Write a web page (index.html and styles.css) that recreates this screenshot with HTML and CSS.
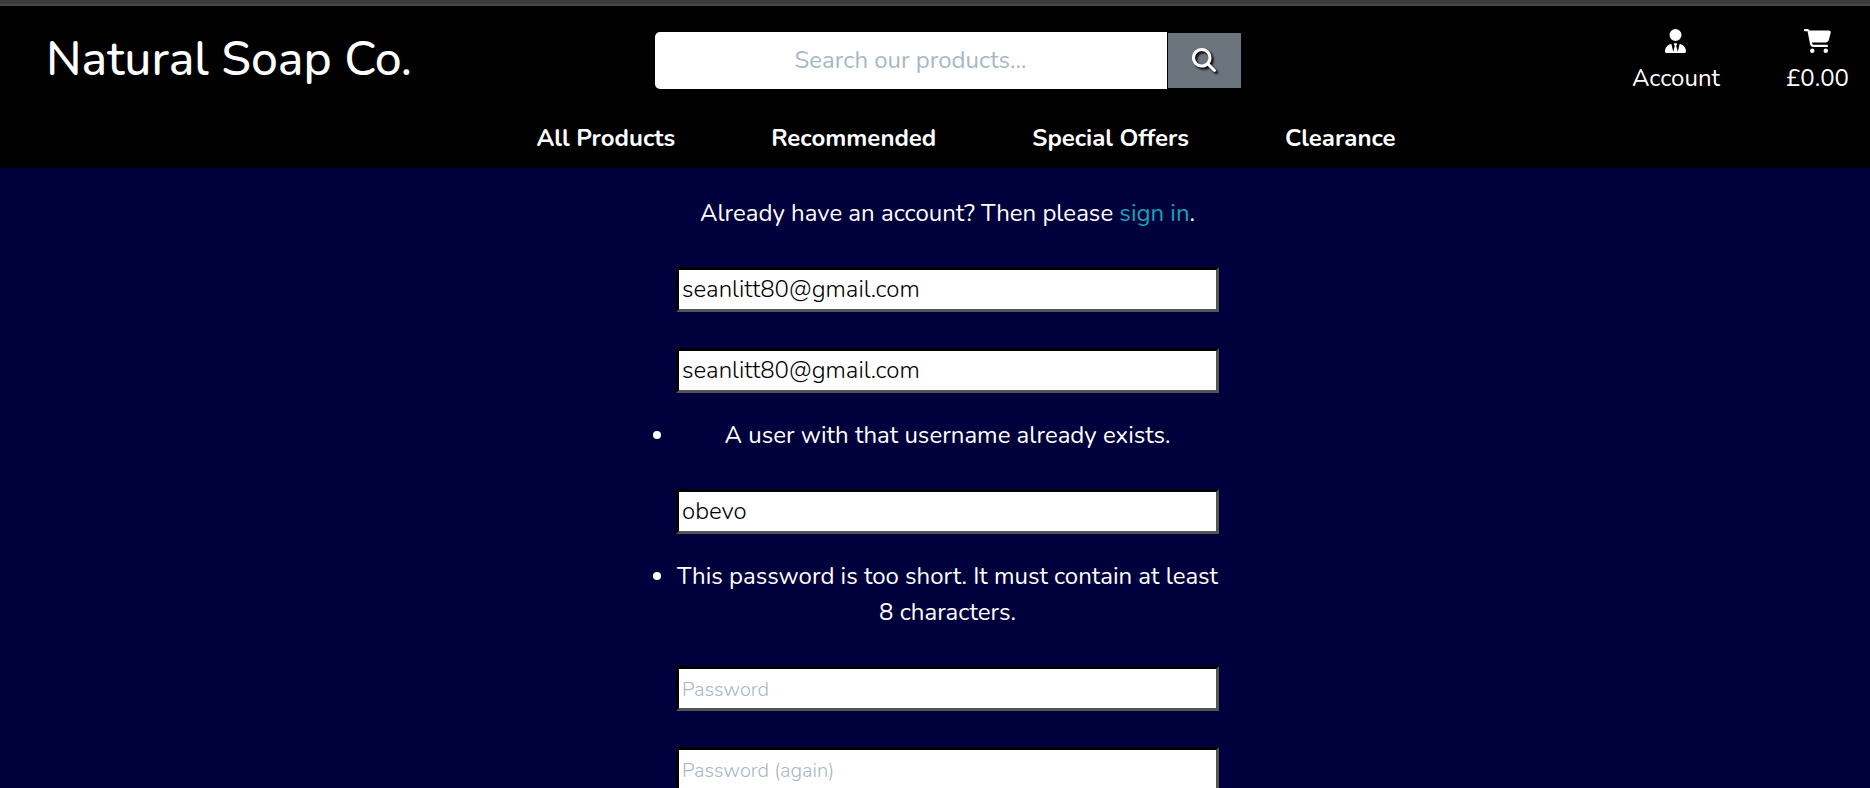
FILE: index.html
```
<!DOCTYPE html>
<html lang="en">
<head>
<meta charset="utf-8">
<meta name="viewport" content="width=device-width, initial-scale=1">
<title>Natural Soap Co.</title>
<link rel="stylesheet" href="styles.css">
</head>
<body>
<header class="site-header">
  <div class="header-row">
    <a class="logo" href="#">Natural Soap Co.</a>
    <form class="search">
      <input class="search-input" type="text" placeholder="Search our products..." aria-label="Search our products">
      <button class="search-button" type="button" aria-label="Search">
        <svg class="icon icon-shadow" viewBox="0 0 512 512"><path d="M416 208c0 45.9-14.9 88.3-40 122.7L502.6 457.4c12.5 12.5 12.5 32.8 0 45.3s-32.8 12.5-45.3 0L330.7 376c-34.4 25.2-76.8 40-122.7 40C93.1 416 0 322.9 0 208S93.1 0 208 0S416 93.1 416 208zM208 352a144 144 0 1 0 0-288 144 144 0 1 0 0 288z"/></svg>
      </button>
    </form>
    <div class="user-links">
      <a class="user-link" href="#">
        <svg class="icon" viewBox="0 0 448 512"><path d="M224 256A128 128 0 1 1 224 0a128 128 0 1 1 0 256zM209.1 359.2l-18.6-31c-6.4-10.7 1.3-24.2 13.7-24.2H224h19.7c12.4 0 20.1 13.6 13.7 24.2l-18.6 31 33.4 123.9 39.5-161.2c77.2 12 136.3 78.8 136.3 159.4c0 17-13.8 30.7-30.7 30.7H265.1 182.9 30.7C13.8 512 0 498.2 0 481.3c0-80.6 59.1-147.4 136.3-159.4l39.5 161.2 33.4-123.9z"/></svg>
        <span>Account</span>
      </a>
      <a class="user-link" href="#">
        <svg class="icon" viewBox="0 0 576 512"><path d="M0 24C0 10.7 10.7 0 24 0H69.5c22 0 41.5 12.8 50.6 32h411c26.3 0 45.5 25 38.6 50.4l-41 152.3c-8.5 31.4-37 53.3-69.5 53.3H170.7l5.4 28.5c2.2 11.3 12.1 19.5 23.6 19.5H488c13.3 0 24 10.7 24 24s-10.7 24-24 24H199.7c-34.6 0-64.3-24.6-70.7-58.5L77.4 54.5c-.7-3.8-4-6.5-7.9-6.5H24C10.7 48 0 37.3 0 24zM128 464a48 48 0 1 1 96 0 48 48 0 1 1 -96 0zm336-48a48 48 0 1 1 0 96 48 48 0 1 1 0-96z"/></svg>
        <span>£0.00</span>
      </a>
    </div>
  </div>
  <nav class="main-nav">
    <a href="#">All Products</a>
    <a href="#">Recommended</a>
    <a href="#">Special Offers</a>
    <a href="#">Clearance</a>
  </nav>
</header>
<main class="page">
  <div class="signup">
    <p class="intro">Already have an account? Then please <a class="signin" href="#">sign in</a>.</p>
    <form>
      <input class="field" type="email" value="seanlitt80@gmail.com" aria-label="E-mail">
      <input class="field" type="email" value="seanlitt80@gmail.com" aria-label="E-mail (again)">
      <ul class="errors"><li>A user with that username already exists.</li></ul>
      <input class="field" type="text" value="obevo" aria-label="Username">
      <ul class="errors"><li>This password is too short. It must contain at least 8 characters.</li></ul>
      <input class="field" type="password" placeholder="Password" aria-label="Password">
      <input class="field" type="password" placeholder="Password (again)" aria-label="Password (again)">
    </form>
  </div>
</main>
</body>
</html>
```
FILE: styles.css
```
* { box-sizing: border-box; }

html { background: #00003c; scrollbar-width: none; }

body {
  margin: 0;
  color: #fff;
  font: 24px/36px Nunito, Lato, sans-serif;
}

a { color: inherit; text-decoration: none; }

.site-header {
  border-top: 4px solid #3c3c3c;
  background: #000;
  padding-bottom: 12px;
}

.header-row {
  display: grid;
  grid-template-columns: minmax(0, 1fr) minmax(0, 586px) minmax(0, 1fr);
  align-items: start;
  border-top: 2px solid #4a4a4a;
  padding: 23px 21px 0 46px;
}

.logo { font-size: 48px; line-height: 60px; font-weight: 500; }

.search { display: flex; align-items: center; gap: 1px; padding-top: 3px; }

.search-input {
  flex: 1;
  min-width: 0;
  height: 57px;
  border: 0;
  border-radius: 5px 0 0 5px;
  padding: 0 2px 2px;
  background: #fff;
  font: inherit;
  text-align: center;
}

::placeholder { color: #aab7c4; opacity: 1; }

.search-button {
  display: flex;
  align-items: center;
  justify-content: center;
  width: 73px;
  height: 55px;
  border: 0;
  padding: 0 0 2px;
  background: #6c757d;
  color: #fff;
}

.icon { display: block; height: 24px; fill: currentColor; }

.icon-shadow { filter: drop-shadow(2px 2px 1px #000); }

.user-links { display: flex; justify-content: flex-end; gap: 66px; }

.user-link { display: flex; flex-direction: column; align-items: center; gap: 7px; }

.main-nav {
  display: flex;
  justify-content: center;
  gap: 96px;
  margin-top: 24px;
  padding-left: 62px;
  font-weight: 700;
}

.page { padding: 27px 0 0 25px; }

.signup {
  width: 543px;
  max-width: 100%;
  margin: 0 auto;
  text-align: center;
}

.intro { margin: 0 0 36px; }

.signin { color: #17a2b8; }

.field {
  display: block;
  width: 100%;
  height: 45px;
  margin: 0 0 36px;
  border: 3px solid;
  border-color: #000 #545454 #545454 #000;
  padding: 0 3px 1px;
  background: #fff;
  color: #000;
  font: inherit;
  font-weight: 300;
}

.field::placeholder { font-size: 20px; }

.field:has(+ .errors) { margin-bottom: 24px; }

.errors { margin: 0 0 36px; padding: 0; }
```
